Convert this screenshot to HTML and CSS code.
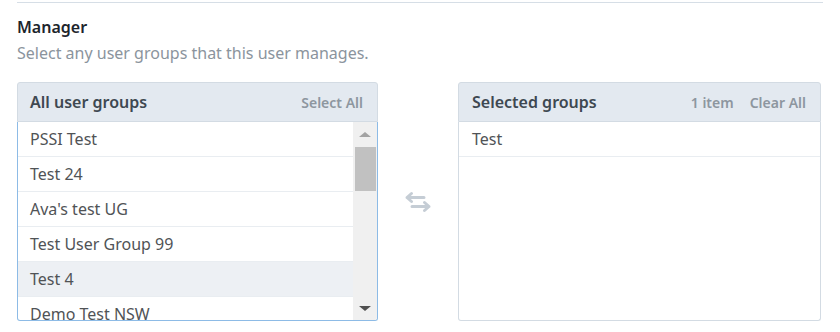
FILE: index.html
```html
<!DOCTYPE html>
<html lang="en">

<head>
    <meta charset="UTF-8">
    <title>Manager groups</title>
    <link rel="stylesheet" href="styles.css">
</head>

<body>
    <div class="section">
        <h3 class="title">Manager</h3>
        <p class="hint">Select any user groups that this user manages.</p>

        <div class="dual">
            <div class="panel">
                <div class="panel-head">
                    <span class="panel-title">All user groups</span>
                    <span class="panel-actions"><a class="link">Select All</a></span>
                </div>
                <div class="listbox focused">
                    <ul class="list">
                        <li class="item">PSSI Test</li>
                        <li class="item">Test 24</li>
                        <li class="item">Ava's test UG</li>
                        <li class="item">Test User Group 99</li>
                        <li class="item hover">Test 4</li>
                        <li class="item">Demo Test NSW</li>
                    </ul>
                    <div class="scrollbar">
                        <span class="sb-btn sb-up"></span>
                        <div class="sb-track"><div class="sb-thumb"></div></div>
                        <span class="sb-btn sb-down"></span>
                    </div>
                </div>
            </div>

            <div class="transfer">
                <svg width="30" height="22" viewBox="0 0 30 22">
                    <g fill="none" stroke="#c5cdd5" stroke-width="3" stroke-linecap="round" stroke-linejoin="round">
                        <path d="M4 6.5 H21 M8.5 2.5 L4 6.5 L8.5 10.5" />
                        <path d="M9 15.5 H26 M21.5 11.5 L26 15.5 L21.5 19.5" />
                    </g>
                </svg>
            </div>

            <div class="panel">
                <div class="panel-head">
                    <span class="panel-title">Selected groups</span>
                    <span class="panel-actions"><span class="count">1 item</span><a class="link">Clear All</a></span>
                </div>
                <div class="listbox">
                    <ul class="list">
                        <li class="item">Test</li>
                    </ul>
                </div>
            </div>
        </div>
    </div>
</body>

</html>
```

FILE: styles.css
```css
* {
    padding: 0;
    margin: 0;
    box-sizing: border-box;
}

body {
    background-color: #fff;
    font-family: "Noto Sans", "Open Sans", sans-serif;
    font-size: 16px;
    color: #4f5358;
}

.section {
    margin: 2px 17px 0 17px;
    width: 806px;
    border-top: 1px solid #d6dee6;
}

.title {
    margin-top: 13px;
    font-size: 16px;
    line-height: 22px;
    font-weight: 600;
    color: #1d252c;
}

.hint {
    margin-top: 4px;
    line-height: 22px;
    color: #8b949d;
}

.dual {
    margin-top: 18px;
    display: flex;
    align-items: center;
}

.panel {
    width: 361px;
    height: 239px;
    display: flex;
    flex-direction: column;
}

.panel:last-child {
    width: 363px;
}

.panel-head {
    height: 40px;
    flex: none;
    display: flex;
    align-items: center;
    justify-content: space-between;
    padding: 0 14px 0 12px;
    background: #e3e9f0;
    border: 1px solid #d3dbe3;
    border-radius: 3px 3px 0 0;
}

.panel:last-child .panel-head,
.panel:last-child .item {
    padding-left: 13px;
}

.panel-title {
    font-weight: 600;
    color: #3e4851;
}

.panel-actions {
    display: flex;
    gap: 16px;
    font-size: 14px;
    font-weight: 600;
    color: #8d969f;
}

.link {
    cursor: pointer;
}

.listbox {
    flex: 1;
    display: flex;
    overflow: hidden;
    border: 1px solid #d3dbe3;
    border-top: none;
    border-radius: 0 0 3px 3px;
}

.listbox.focused {
    border-color: #8dbbe6;
}

.list {
    flex: 1;
    list-style: none;
}

.item {
    height: 35px;
    padding: 0 12px;
    display: flex;
    align-items: center;
    border-bottom: 1px solid #e9edf1;
    color: #505356;
}

.item.hover {
    background: #edf0f4;
}

.scrollbar {
    width: 24px;
    flex: none;
    display: flex;
    flex-direction: column;
    background: #f0f0f0;
}

.sb-btn {
    height: 24px;
    flex: none;
    display: flex;
    align-items: center;
    justify-content: center;
}

.sb-btn::before {
    content: "";
    border-left: 6px solid transparent;
    border-right: 6px solid transparent;
}

.sb-up::before {
    border-bottom: 5px solid #a3a3a3;
}

.sb-down::before {
    border-top: 5px solid #505050;
}

.sb-track {
    flex: 1;
    padding: 1px 1px 0 2px;
}

.sb-thumb {
    height: 44px;
    background: #c1c1c1;
}

.transfer {
    width: 80px;
    display: flex;
    justify-content: center;
}
```
